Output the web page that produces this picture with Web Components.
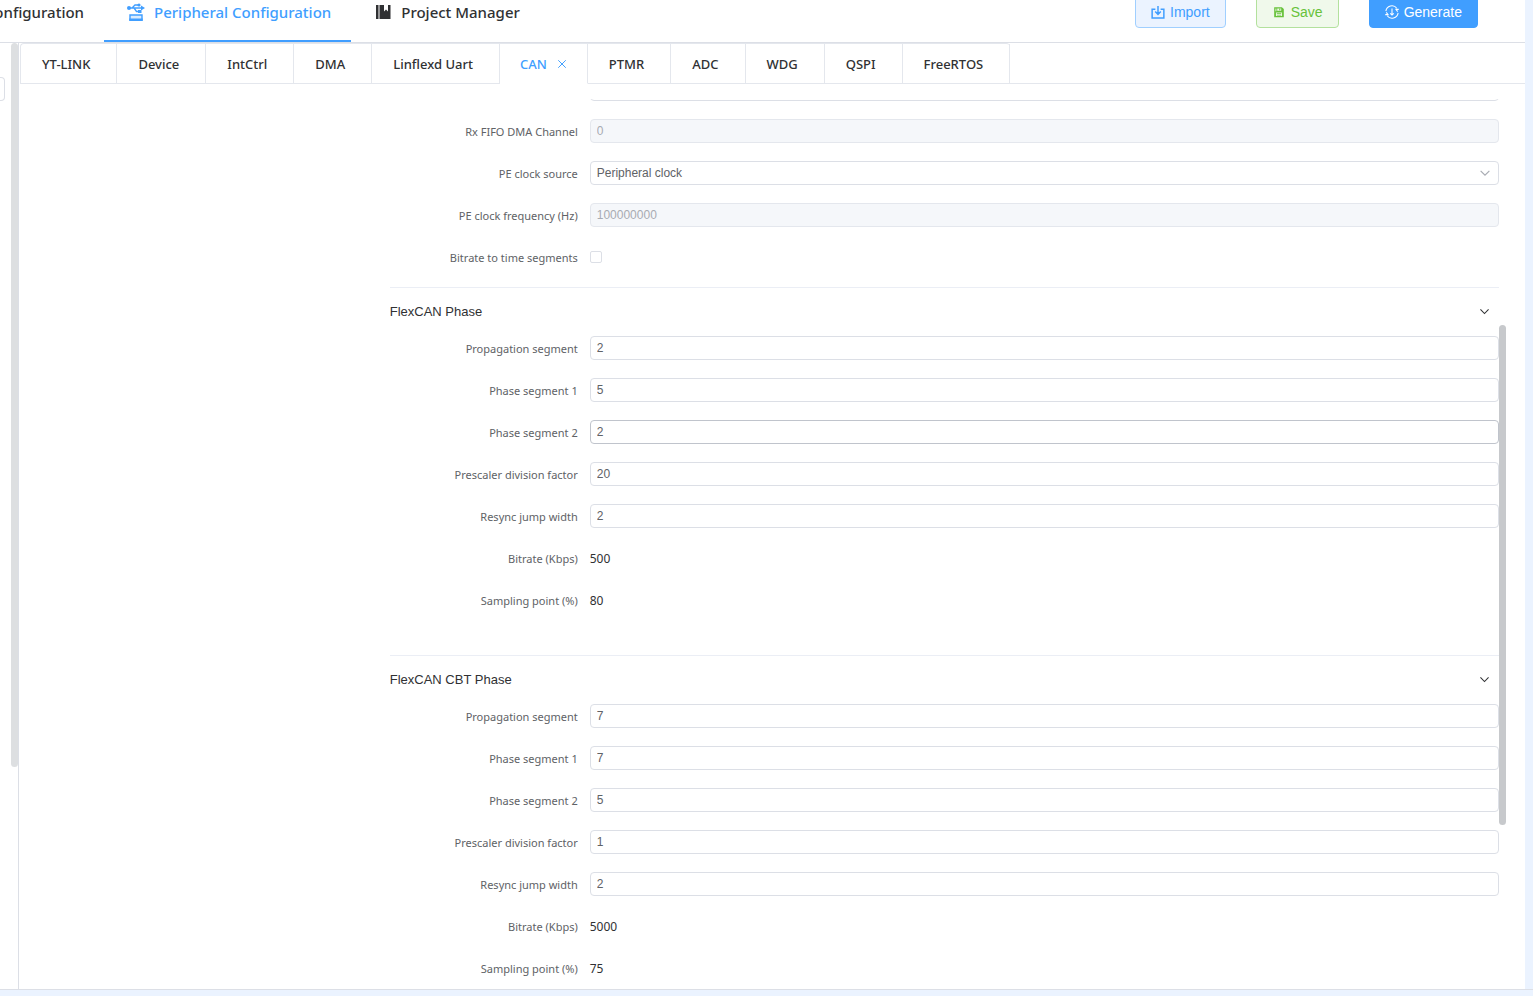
<!DOCTYPE html>
<html lang="en">
<head>
<meta charset="utf-8">
<title>Peripheral Configuration</title>
<style>
	html, body{
		height: 100%;
		margin: 0;
	}
	body{
		background-color: #ebf3ff;
		color: #303133;
		font-family: "Noto Sans", "Open Sans", sans-serif;
		font-size: 12px;
		overflow: hidden;
	}
</style>
</head>
<body>
<config-app></config-app>

<script>
// ---------- icons ----------
const icons = {
	usb: `<circle cx="2" cy="5" r="2" fill="currentColor"/><path fill="none" stroke="currentColor" stroke-width="1.3" d="M2 5h13M5 5l3-3h3M7 5l2.500 3.500h2"/><path fill="currentColor" d="M14 2.500 18 5l-4 2.500zM11 7h3.500v3H11z"/><circle cx="12" cy="2" r="1.600" fill="currentColor"/><path fill="#d9ecff" stroke="currentColor" stroke-width="1.4" d="M3 12h12v5H3z"/><path fill="currentColor" d="M2.300 15.500h13.400V18H2.300z"/>`,
	book: `<path fill="currentColor" d="M2 2h2.500v14H2zM5.500 2H10v6.500l2-2 2 2V2h2.500v14h-11z"/>`,
	importing: `<path fill="none" stroke="currentColor" stroke-width="1.7" d="M5 4.800H1.300v10h13.400v-10H11M8 1v9.500M4.800 7.500 8 10.700 11.200 7.500"/>`,
	save: `<path fill="currentColor" fill-rule="evenodd" d="M2.500 2.500h8.800l2.200 2.200V14h-11zM4 4v3h1V4zM6 4v2.500h4.500V4zM4.500 8.500v4h7v-4zM5.500 9.300h5v.9h-5zM5.500 11.200h5v.9h-5zM8.300 4.400h1.200v1.500H8.300z"/>`,
	generate: `<path fill="none" stroke="currentColor" stroke-width="1.2" d="M1 7A7 7 0 0 1 13.500 3.700M15 9A7 7 0 0 1 2.500 12.300M14.500 7.500 12.500 5h3.200M1.500 8.500l2 2.500H.3M8 4v7.500M6 9.500l2 2 2-2"/>`,
	down: `<path fill="none" stroke="currentColor" stroke-width="1.3" d="M3 5.500 8 10.500 13 5.500"/>`,
	close: `<path fill="none" stroke="currentColor" stroke-width="1.3" d="M3 3 13 13M13 3 3 13"/>`
};

function icon(name, box = 16){
	return `<svg viewBox="0 0 ${box} ${box}" aria-hidden="true">${icons[name]}</svg>`;
}

// ---------- top menu link ----------
class MenuLink extends HTMLElement{
	constructor(){
		super();
		this.attachShadow({mode: 'open'});
		const name = this.getAttribute('icon');
		this.shadowRoot.innerHTML = `
			<style>
			:host{
				display: block;
			}
			a{
				display: flex;
				align-items: center;
				box-sizing: border-box;
				height: 60px;
				padding: 2px 20px 0;
				border-bottom: 2px solid transparent;
				color: #303133;
				font-size: 15px;
				font-weight: 500;
				text-decoration: none;
				white-space: nowrap;
			}
			:host([active]) a{
				color: #409eff;
				border-color: #409eff;
			}
			svg{
				width: 18px;
				height: 18px;
				margin: 0 9px 0 3px;
			}
			</style>
			<a href="#">${name ? icon(name, 18) : ''}<slot></slot></a>
		`;
	}
}

// ---------- header button ----------
class ToolButton extends HTMLElement{
	constructor(){
		super();
		this.attachShadow({mode: 'open'});
		this.shadowRoot.innerHTML = `
			<style>
			:host{
				display: block;
				--text: #409eff;
				--fill: #ebf3ff;
				--line: #a0cfff;
			}
			:host([kind="success"]){
				--text: #67c23a;
				--fill: #f0f9eb;
				--line: #b3e19d;
			}
			:host([kind="primary"]){
				--text: #fff;
				--fill: #409eff;
				--line: #409eff;
			}
			button{
				display: flex;
				align-items: center;
				gap: 5px;
				height: 32px;
				padding: 0 15px;
				border: 1px solid var(--line);
				border-radius: 4px;
				background-color: var(--fill);
				color: var(--text);
				font: 14px "Liberation Sans", Arial, sans-serif;
			}
			svg{
				width: 14px;
				height: 14px;
			}
			</style>
			<button type="button">${icon(this.getAttribute('icon'))}<slot></slot></button>
		`;
	}
}

// ---------- peripheral tabs ----------
class TabItem extends HTMLElement{
	constructor(){
		super();
		this.attachShadow({mode: 'open'});
		const active = this.hasAttribute('active');
		this.shadowRoot.innerHTML = `
			<style>
			:host{
				display: flex;
				align-items: center;
				box-sizing: border-box;
				height: 40px;
				padding: 0 26px 0 21px;
				border-right: 1px solid #e4e7ed;
				border-bottom: 1px solid #e4e7ed;
			}
			:host([active]){
				padding: 0 19px 0 20px;
				border-bottom-color: #fff;
			}
			button{
				padding: 0;
				border: 0;
				background: none;
				color: #303133;
				font: 500 13px "Noto Sans", "Open Sans", sans-serif;
				white-space: nowrap;
			}
			:host([active]) button{
				color: #409eff;
			}
			.close{
				display: flex;
				margin-left: 9px;
			}
			svg{
				width: 12px;
				height: 12px;
			}
			</style>
			<button type="button"><slot></slot></button>
			${active ? `<button type="button" class="close" aria-label="Close">${icon('close')}</button>` : ''}
		`;
	}
}

class TabBar extends HTMLElement{
	constructor(){
		super();
		this.attachShadow({mode: 'open'});
		this.shadowRoot.innerHTML = `
			<style>
			:host{
				display: flex;
				height: 41px;
			}
			nav{
				display: flex;
				border: 1px solid #e4e7ed;
				border-width: 1px 0 0 1px;
				border-radius: 4px 4px 0 0;
			}
			.rest{
				flex: 1;
				border-bottom: 1px solid #e4e7ed;
			}
			</style>
			<nav><slot></slot></nav>
			<div class="rest"></div>
		`;
	}
}

// ---------- one label + control line ----------
class FormRow extends HTMLElement{
	constructor(){
		super();
		this.attachShadow({mode: 'open'});
		this.shadowRoot.innerHTML = `
			<style>
			:host{
				display: grid;
				grid-template-columns: 188px minmax(0, 1fr);
				column-gap: 12px;
				height: 24px;
				margin-bottom: 18px;
				line-height: 24px;
			}
			label{
				padding-top: 1px;
				color: #606266;
				font-size: 11px;
				text-align: right;
				white-space: nowrap;
			}
			.field{
				position: relative;
				display: flex;
				align-items: center;
				height: 24px;
			}
			output{
				padding-top: 2px;
			}
			input, select{
				box-sizing: border-box;
				width: 100%;
				height: 24px;
				margin: 0;
				padding: 0 6px;
				border: 1px solid #dcdfe6;
				border-radius: 4px;
				background-color: #fff;
				color: #606266;
				font: 12px "Liberation Sans", Arial, sans-serif;
				appearance: none;
				outline: none;
			}
			input:hover, :host([hovered]) input{
				border-color: #c0c4cc;
			}
			input:disabled{
				border-color: #e4e7ed;
				background-color: #f5f7fa;
				color: #a8abb2;
			}
			input[type="checkbox"]{
				width: 12px;
				height: 12px;
				padding: 0;
				border-radius: 2px;
			}
			svg{
				position: absolute;
				right: 7px;
				width: 14px;
				height: 14px;
				color: #a8abb2;
				pointer-events: none;
			}
			</style>
			<label for="control">${this.getAttribute('label') || ''}</label>
			<div class="field">${this.control()}</div>
		`;
	}

	control(){
		const value = this.getAttribute('value') || '';
		switch (this.getAttribute('type')){
			case 'select':
				return `<select id="control"><option>${value}</option></select>${icon('down')}`;
			case 'checkbox':
				return `<input id="control" type="checkbox">`;
			case 'output':
				return `<output id="control">${value}</output>`;
			default:
				return `<input id="control" type="text" value="${value}" ${this.hasAttribute('disabled') ? 'disabled' : ''}>`;
		}
	}
}

// ---------- collapsible group ----------
class FormGroup extends HTMLElement{
	constructor(){
		super();
		this.attachShadow({mode: 'open'});
		this.shadowRoot.innerHTML = `
			<style>
			:host{
				display: block;
				padding-bottom: 25px;
				border-top: 1px solid #ebeef5;
			}
			button{
				display: flex;
				align-items: center;
				justify-content: space-between;
				width: 100%;
				height: 48px;
				padding: 0 8px 2px 0;
				border: 0;
				background: none;
				color: #303133;
				font: 13px "Liberation Sans", Arial, sans-serif;
			}
			svg{
				width: 13px;
				height: 13px;
			}
			</style>
			<button type="button" aria-expanded="true">${this.getAttribute('title')}${icon('down')}</button>
			<div class="body"><slot></slot></div>
		`;
	}

	connectedCallback(){
		const button = this.shadowRoot.querySelector('button');
		const body = this.shadowRoot.querySelector('.body');
		button.addEventListener('click', () => {
			body.hidden = !body.hidden;
			button.setAttribute('aria-expanded', String(!body.hidden));
		});
	}
}

// ---------- scrolling form pane ----------
class ScrollPane extends HTMLElement{
	constructor(){
		super();
		this.attachShadow({mode: 'open'});
		this.shadowRoot.innerHTML = `
			<style>
			:host{
				position: relative;
				display: block;
				flex: 1;
				min-height: 0;
				margin: 15px 19px 0 0;
			}
			.view{
				display: grid;
				grid-template-columns: minmax(0, 1fr) minmax(0, 3fr);
				height: 100%;
				padding-right: 7px;
				overflow: auto;
				scrollbar-width: none;
			}
			.form{
				grid-column: 2;
			}
			.thumb{
				position: absolute;
				top: 226px;
				right: 0;
				width: 7px;
				height: 500px;
				border-radius: 4px;
				background-color: #c7c9cc;
			}
			</style>
			<div class="view"><div class="form"><slot></slot></div></div>
			<div class="thumb"></div>
		`;
	}

	connectedCallback(){
		requestAnimationFrame(() => {
			this.shadowRoot.querySelector('.view').scrollTop = Number(this.getAttribute('offset'));
		});
	}
}

// ---------- whole page ----------
class ConfigApp extends HTMLElement{
	constructor(){
		super();
		this.attachShadow({mode: 'open'});
		this.shadowRoot.innerHTML = `
			<style>
			:host{
				display: flex;
				flex-direction: column;
				box-sizing: border-box;
				height: 100vh;
				padding-bottom: 6px;
			}
			.page{
				display: flex;
				flex: 1;
				flex-direction: column;
				min-height: 0;
				margin-right: 8px;
				background-color: #fff;
			}
			header{
				display: flex;
				align-items: flex-end;
				justify-content: space-between;
				height: 42px;
				border-bottom: 1px solid #dcdfe6;
				overflow: hidden;
			}
			.menu, .tools{
				display: flex;
			}
			.menu menu-link:first-child{
				display: flex;
				justify-content: flex-end;
				width: 104px;
			}
			.tools{
				gap: 30px;
				padding: 0 47px 14px 0;
			}
			.columns{
				display: flex;
				flex: 1;
				min-height: 0;
			}
			aside{
				display: flex;
				justify-content: space-between;
				width: 18px;
				border-right: 1px solid #dcdfe6;
			}
			.stub{
				width: 4px;
				height: 22px;
				margin-top: 34px;
				border: 1px solid #dcdfe6;
				border-left: 0;
				border-radius: 0 4px 4px 0;
			}
			.bar{
				width: 7px;
				height: 724px;
				border-radius: 4px;
				background-color: #dddfe1;
			}
			main{
				display: flex;
				flex: 1;
				flex-direction: column;
				min-width: 0;
				padding-left: 1px;
			}
			footer{
				border-top: 1px solid #dcdfe6;
			}
			</style>
			<div class="page">
				<header>
					<nav class="menu">
						<menu-link>onfiguration</menu-link>
						<menu-link icon="usb" active>Peripheral Configuration</menu-link>
						<menu-link icon="book">Project Manager</menu-link>
					</nav>
					<div class="tools">
						<tool-button icon="importing">Import</tool-button>
						<tool-button icon="save" kind="success">Save</tool-button>
						<tool-button icon="generate" kind="primary">Generate</tool-button>
					</div>
				</header>
				<div class="columns">
					<aside><div class="stub"></div><div class="bar"></div></aside>
					<main>
						<tab-bar>
							<tab-item>YT-LINK</tab-item>
							<tab-item>Device</tab-item>
							<tab-item>IntCtrl</tab-item>
							<tab-item>DMA</tab-item>
							<tab-item>Linflexd Uart</tab-item>
							<tab-item active>CAN</tab-item>
							<tab-item>PTMR</tab-item>
							<tab-item>ADC</tab-item>
							<tab-item>WDG</tab-item>
							<tab-item>QSPI</tab-item>
							<tab-item>FreeRTOS</tab-item>
						</tab-bar>
						<scroll-pane offset="22">
							<form-row></form-row>
							<form-row label="Rx FIFO DMA Channel" value="0" disabled></form-row>
							<form-row label="PE clock source" type="select" value="Peripheral clock"></form-row>
							<form-row label="PE clock frequency (Hz)" value="100000000" disabled></form-row>
							<form-row label="Bitrate to time segments" type="checkbox"></form-row>
							<form-group title="FlexCAN Phase">
								<form-row label="Propagation segment" value="2"></form-row>
								<form-row label="Phase segment 1" value="5"></form-row>
								<form-row label="Phase segment 2" value="2" hovered></form-row>
								<form-row label="Prescaler division factor" value="20"></form-row>
								<form-row label="Resync jump width" value="2"></form-row>
								<form-row label="Bitrate (Kbps)" type="output" value="500"></form-row>
								<form-row label="Sampling point (%)" type="output" value="80"></form-row>
							</form-group>
							<form-group title="FlexCAN CBT Phase">
								<form-row label="Propagation segment" value="7"></form-row>
								<form-row label="Phase segment 1" value="7"></form-row>
								<form-row label="Phase segment 2" value="5"></form-row>
								<form-row label="Prescaler division factor" value="1"></form-row>
								<form-row label="Resync jump width" value="2"></form-row>
								<form-row label="Bitrate (Kbps)" type="output" value="5000"></form-row>
								<form-row label="Sampling point (%)" type="output" value="75"></form-row>
							</form-group>
						</scroll-pane>
					</main>
				</div>
			</div>
			<footer></footer>
		`;
	}
}

window.customElements.define('menu-link', MenuLink);
window.customElements.define('tool-button', ToolButton);
window.customElements.define('tab-item', TabItem);
window.customElements.define('tab-bar', TabBar);
window.customElements.define('form-row', FormRow);
window.customElements.define('form-group', FormGroup);
window.customElements.define('scroll-pane', ScrollPane);
window.customElements.define('config-app', ConfigApp);
</script>
</body>
</html>
